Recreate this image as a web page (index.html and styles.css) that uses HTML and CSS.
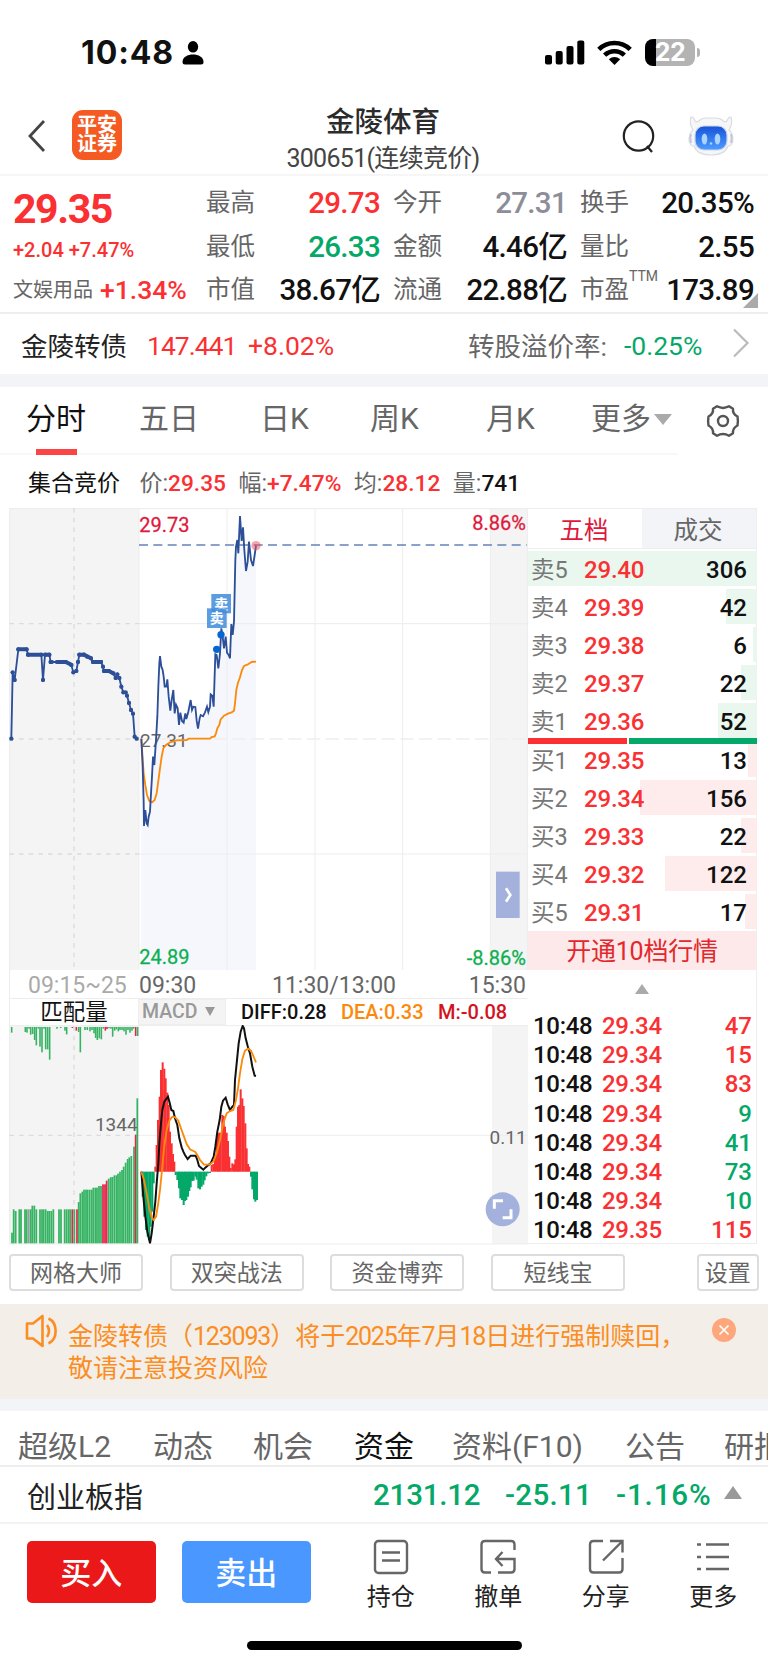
FILE: index.html
```html
<!DOCTYPE html>
<html lang="zh-CN">
<head>
  <meta charset="UTF-8">
  <meta name="viewport" content="width=device-width, initial-scale=1.0">
  <title>金陵体育 300651</title>
  <link rel="stylesheet" href="styles.css">
</head>
<body>
  <div class="status-bar">
    <span class="clock">10:48</span>
    <svg class="person" width="22" height="24" viewBox="0 0 22 24"><ellipse cx="11" cy="5.8" rx="5.2" ry="5.8"/><path d="M0.5 21C0.5 16 5.5 13.4 11 13.4S21.500 16 21.500 21Q21.500 23.500 19 23.500H3Q0.500 23.500 0.500 21Z"/></svg>
    <svg class="signal" width="40" height="25" viewBox="0 0 40 25"><rect x="0" y="15" width="7" height="9.500" rx="2"/><rect x="10.700" y="11" width="7" height="13.500" rx="2"/><rect x="21.500" y="6" width="7" height="18.500" rx="2"/><rect x="32.300" y="0.500" width="7" height="24" rx="2"/></svg>
    <svg class="wifi" width="35" height="26" viewBox="0 0 35 26" fill="none" stroke="#000" stroke-width="4.600"><path d="M1.800 9.300C10.500 0.800 24.500 0.800 33.200 9.300"/><path d="M7.600 15.200C13.200 9.900 21.800 9.900 27.400 15.200"/><path d="M17.500 25L11.800 19.300Q17.500 14.600 23.200 19.300Z" fill="#000" stroke="none"/></svg>
    <div class="battery"><span>22</span></div>
    <i class="battery-tip"></i>
  </div>

  <header class="header">
    <svg class="back" width="20" height="34" viewBox="0 0 20 34"><path d="M17 2L3 17L17 32"/></svg>
    <div class="logo">平安<br>证券</div>
    <div class="title">
      <h1>金陵体育</h1>
      <p>300651(连续竞价)</p>
    </div>
    <svg class="search" width="34" height="36" viewBox="0 0 34 36"><circle cx="16.500" cy="17" r="14.700"/><path d="M25 27L30 33"/></svg>
    <svg class="robot" width="46" height="40" viewBox="0 0 46 40">
      <defs><linearGradient id="face" x1="0" y1="0" x2="0" y2="1"><stop offset="0" stop-color="#1652d8"/><stop offset="1" stop-color="#4f9cff"/></linearGradient></defs>
      <path d="M3 1Q6 1 7 5Q9 7 12 4Q14 2 18 2H28Q32 2 34 4Q37 7 39 5Q40 1 43 1Q45 8 41 14Q45 17 45 25Q44 30 40 30Q37 39 23 39T6 30Q2 30 1 25Q1 17 5 14Q1 8 3 1Z" fill="#f5f6f8" stroke="#d9dce1" stroke-width="1.200"/>
      <path d="M3 18Q1.500 22 3 27M43 18Q44.500 22 43 27" fill="none" stroke="#c3c9d2" stroke-width="2"/>
      <rect x="7" y="10" width="32" height="24" rx="9" fill="url(#face)" stroke="#c9d6ea" stroke-width="1.200"/>
      <ellipse cx="16.500" cy="23" rx="2.800" ry="5.500" fill="#a9d4ff"/><ellipse cx="29.500" cy="23" rx="2.800" ry="5.500" fill="#a9d4ff"/><circle cx="23" cy="27.500" r="1.200" fill="#a9d4ff"/>
    </svg>
  </header>

  <section class="quote">
    <div class="price-box">
      <div class="price">29.35</div>
      <div class="change">+2.04 +7.47%</div>
      <div class="sector">文娱用品 <b>+1.34%</b></div>
    </div>
    <dl class="stats">
      <dt>最高</dt><dd class="up">29.73</dd>
      <dt>今开</dt><dd class="flat">27.31</dd>
      <dt>换手</dt><dd>20.35%</dd>
      <dt>最低</dt><dd class="down">26.33</dd>
      <dt>金额</dt><dd>4.46亿</dd>
      <dt>量比</dt><dd>2.55</dd>
      <dt>市值</dt><dd>38.67亿</dd>
      <dt>流通</dt><dd>22.88亿</dd>
      <dt>市盈<sup>TTM</sup></dt><dd>173.89</dd>
    </dl>
    <i class="corner"></i>
  </section>

  <section class="bond">
    <span class="bond-name">金陵转债</span>
    <span class="bond-price">147.441</span>
    <span class="bond-change">+8.02%</span>
    <span class="premium">转股溢价率:</span>
    <span class="premium-value">-0.25%</span>
    <svg width="18" height="30" viewBox="0 0 18 30"><path d="M2 1.500L15.500 15L2 28.500"/></svg>
  </section>

  <nav class="period">
    <a class="active">分时</a><a>五日</a><a>日K</a><a>周K</a><a>月K</a><a class="more">更多</a>
    <svg class="gear" width="34" height="34" viewBox="0 0 34 34"><path d="M11 2.300Q17 5.600 23 2.300L27 4.800Q26.500 10 31.500 12.500Q32.300 17 31.500 21.500Q26.500 24 27 29.200L23 31.700Q17 28.400 11 31.700L7 29.200Q7.500 24 2.500 21.500Q1.700 17 2.500 12.500Q7.500 10 7 4.800Z"/><circle cx="17" cy="17" r="5"/></svg>
  </nav>

  <div class="summary">
    <span class="phase">集合竞价</span>
    <span>价:<b>29.35</b></span>
    <span>幅:<b>+7.47%</b></span>
    <span>均:<b>28.12</b></span>
    <span>量:<b class="black">741</b></span>
  </div>

  <main class="board">
    <div class="charts">
      <!-- 分时图, 1px = 3 units -->
      <svg class="trend" width="528" height="462" viewBox="0 24 1584 1386">
        <defs><marker id="dot" markerUnits="userSpaceOnUse" markerWidth="14" markerHeight="14" refX="7" refY="7"><circle cx="7" cy="7" r="6.500" fill="#2c4f98"/></marker></defs>
        <rect x="28" y="24" width="389" height="1386" class="shade"/>
        <rect x="1471" y="24" width="113" height="1386" class="shade"/>
        <polygon class="area" points="424,716 432,978 443,975 450,935 459,770 468,720 480,468 491,530 511,632 520,570 537,675 556,640 572,600 594,686 615,637 637,587 641,620 646,463 655,505 664,385 672,445 690,475 702,365 708,140 720,48 738,213 747,125 759,198 768,137 768,1410 424,1410"/>
        <path class="grid" d="M28 26H1584M29 24V1410M417 24V1410M681 24V1410M945 24V1410M1208 24V1410M1471 24V1410M1582 24V1410M417 371H1584M417 1062H1584"/>
        <path class="dash" d="M222 24V1410M28 371H417M28 717H417M28 1062H417"/>
        <path class="dash light" d="M417 717H1584"/>
        <text x="420" y="742" class="mid">27.31</text>
        <polyline class="auction" points="34,716 38,517 44,540 55,448 80,448 84,464 124,464 129,540 135,464 148,464 152,486 197,486 214,495 220,517 229,513 234,486 238,464 252,464 262,470 273,475 279,486 303,486 309,500 312,513 326,513 340,520 347,534 352,523 358,534 364,560 370,577 377,577 381,587 387,609 393,630 399,641 404,710 410,716"/>
        <path class="auction-flat" d="M55 448H79M84 464H122M137 464H148M152 486H156M170 486H197L212 493M238 464H252L273 475M279 486H303M312 513H326L340 520"/>
        <polyline class="average" points="424,716 427,760 431,820 436,855 441,885 448,903 456,907 464,900 470,880 474,850 480,805 485,770 490,745 498,735 510,727 530,721 560,720 566,716 630,716 635,711 644,709 648,700 652,685 658,675 662,658 672,647 684,641 695,637 702,632 705,610 709,570 714,548 720,532 726,510 732,498 742,494 755,486 768,485"/>
        <path class="last" d="M417 135H1580"/>
        <polyline class="line" points="424,716 428,800 431,905 432,978 436,930 440,970 443,975 446,950 450,935 453,880 456,830 459,770 463,795 468,720 472,650 475,560 478,490 480,468 484,500 488,510 491,530 494,560 499,560 502,538 506,590 511,632 515,600 520,570 524,640 528,614 533,625 537,675 541,638 546,663 551,668 556,640 559,657 565,635 568,620 572,600 576,630 580,620 586,621 590,662 594,686 599,655 602,645 609,649 615,637 621,620 625,636 630,620 632,583 637,587 641,620 646,463 650,465 655,505 660,460 664,385 668,410 672,445 677,410 681,458 686,465 690,475 694,372 698,405 702,365 706,180 708,140 712,120 715,160 720,48 725,123 729,82 733,150 738,213 743,185 747,125 753,180 759,198 764,165 768,137"/>
        <circle cx="768" cy="137" r="14" fill="#ee4a5c" opacity="0.5"/>
        <circle cx="650" cy="448" r="11" fill="#0566d2"/><circle cx="663" cy="404" r="11" fill="#0566d2"/>
        <rect class="tag" x="634" y="282" width="59" height="58"/><text class="tag-text" x="643" y="326">卖</text>
        <rect class="tag" x="621" y="325" width="59" height="59"/><text class="tag-text" x="629" y="370">卖</text>
        <text x="418" y="95" class="high">29.73</text>
        <text x="1578" y="91" class="high" text-anchor="end">8.86%</text>
        <text x="418" y="1391" class="low">24.89</text>
        <text x="1578" y="1395" class="low" text-anchor="end">-8.86%</text>
        <rect x="1488" y="1115" width="71" height="139" fill="#a3b1dc"/>
        <path d="M1518 1165L1531 1185L1518 1205" fill="none" stroke="#fff" stroke-width="8"/>
      </svg>
      <div class="axis"><span class="pre">09:15~25</span><span class="t1">09:30</span><span class="t2">11:30/13:00</span><span class="t3">15:30</span></div>
      <div class="indicator"><span class="match">匹配量</span><span class="macd">MACD<i></i></span><span class="diff">DIFF:0.28</span><span class="dea">DEA:0.33</span><span class="m">M:-0.08</span></div>
      <svg class="sub" width="528" height="220" viewBox="0 45 1584 660">
        <rect x="28" y="48" width="389" height="654" class="shade"/>
        <rect x="1476" y="48" width="108" height="654" class="shade"/>
        <path class="grid" d="M28 47H1584M29 45V702M28 702H1584M417 376H1584"/>
        <path class="dash" d="M222 48V702M28 376H417"/>
        <g id="bars"></g>
        <polyline class="k-line" points="424,485 430,560 436,620 442,665 450,700 455,670 461,620 466,575 470,520 475,460 478,400 483,340 487,300 493,275 498,268 504,260 509,278 514,300 520,303 525,325 532,345 538,385 545,412 550,425 555,435 563,447 572,437 587,437 592,450 597,468 603,473 610,479 616,473 624,466 632,460 641,440 646,410 652,365 659,330 664,290 669,272 677,263 683,283 690,300 697,290 702,285 705,210 710,160 716,100 722,65 728,48 732,55 737,85 743,108 750,130 757,170 764,197 768,198"/>
        <polyline class="average" points="424,485 432,510 440,550 448,595 455,622 461,630 468,620 474,585 480,540 486,480 492,415 500,360 508,332 517,320 526,322 535,332 543,355 552,380 560,402 570,418 586,426 592,435 600,450 612,464 628,464 640,455 650,430 660,390 670,340 680,310 690,303 700,300 708,270 714,235 720,190 727,148 735,122 745,116 753,122 760,138 768,157"/>
        <text x="413" y="362" class="mid" text-anchor="end">1344</text>
        <text x="1580" y="401" class="mid" text-anchor="end">0.11</text>
        <circle cx="1508" cy="598" r="51" fill="#a3b1dc"/>
        <path d="M1483 596V572H1509M1533 598V623H1508" fill="none" stroke="#fff" stroke-width="9"/>
      </svg>
    </div>

    <aside class="book">
      <div class="book-tabs"><span class="on">五档</span><span>成交</span></div>
      <div id="asks"></div>
      <div class="ratio"><i></i><b></b></div>
      <div id="bids"></div>
      <div class="unlock">开通10档行情</div>
      <div class="fold"><i></i></div>
      <div id="ticks"></div>
    </aside>
  </main>

  <div class="tools">
    <button>网格大师</button><button>双突战法</button><button>资金博弈</button><button>短线宝</button><button class="setting">设置</button>
  </div>

  <div class="notice">
    <svg class="horn" width="33" height="34" viewBox="0 0 33 34"><path d="M2 9.500H8L17.500 2V32L8 24.500H2Z"/><path d="M22 11Q26 17 22 23M23.500 4.500C33 9 33 25 23.500 29.500"/></svg>
    <p>金陵转债（<span>123093</span>）将于<span>2025</span>年<span>7</span>月<span>18</span>日进行强制赎回，<br>敬请注意投资风险</p>
    <svg class="close" width="24" height="24" viewBox="0 0 24 24"><circle cx="12" cy="12" r="12"/><path d="M7.500 7.500L16.500 16.500M16.500 7.500L7.500 16.500"/></svg>
  </div>

  <nav class="info-tabs">
    <a>超级L2</a><a>动态</a><a>机会</a><a class="active">资金</a><a>资料(F10)</a><a>公告</a><a>研报</a>
  </nav>

  <div class="index-row">
    <span class="index-name">创业板指</span><span class="i1">2131.12</span><span class="i2">-25.11</span><span class="i3">-1.16%</span><i></i>
  </div>

  <footer class="actions">
    <button class="buy">买入</button>
    <button class="sell">卖出</button>
    <div class="action"><svg width="36" height="36" viewBox="0 0 36 36"><rect x="2" y="2" width="32" height="32" rx="3.500"/><path d="M9 13.500H27M9 21.500H27"/></svg>持仓</div>
    <div class="action"><svg width="36" height="36" viewBox="0 0 36 36"><path d="M11 33.500H5Q1.500 33.500 1.500 30V5.500Q1.500 2 5 2H31Q34.500 2 34.500 5.500V11M18 33.500H31Q34.500 33.500 34.500 30V20H16M22.500 13L16 20L22.500 27"/></svg>撤单</div>
    <div class="action"><svg width="36" height="36" viewBox="0 0 36 36"><path d="M15 2H5.500Q2 2 2 5.500V30Q2 33.500 5.500 33.500H31Q34.500 33.500 34.500 30V19M22 2H34.500V13.500M34.500 2L15 21.500"/></svg>分享</div>
    <div class="action"><svg width="36" height="36" viewBox="0 0 36 36"><path d="M11 5.500H34M11 18H34M11 30H34M2 5.500H6M2 18H6M2 30H6"/></svg>更多</div>
  </footer>
  <div class="home"></div>

  <script>
    const RED = '#fa3032', GREEN = '#04a868';
    const bars = document.getElementById('bars');

    function bar(x, from, to, color, width) {
      const r = document.createElementNS('http://www.w3.org/2000/svg', 'rect');
      r.setAttribute('x', x - width / 2);
      r.setAttribute('y', Math.min(from, to));
      r.setAttribute('width', width);
      r.setAttribute('height', Math.abs(to - from));
      r.setAttribute('fill', color);
      bars.appendChild(r);
    }

    // 未匹配量
    const unmatched = [[35,68],[76,66],[81,68],[87,56],[92,74],[98,72],[104,90],[109,106],[115,56],[120,110],[126,127],[132,56],[137,118],[143,118],[149,149],[171,56],[182,54],[195,62],[200,73],[217,54,1],[229,62,1],[236,66],[241,127],[255,60],[262,60],[270,64],[276,60],[282,70],[287,84],[292,90],[298,85],[304,88],[310,56],[316,62,1],[321,57,1],[327,55],[333,56],[338,80],[344,62],[349,58],[355,64],[360,60],[366,60],[372,64],[378,74],[384,60],[390,68],[396,62],[401,56],[407,78,1],[413,78]];
    unmatched.forEach(([x, y, red]) => bar(x, 51, y, red ? '#e5254a' : '#36b463', 4.8));

    // 匹配量
    const matched = [[36,668],[41,598],[47,603],[58,598],[63,598],[75,598],[80,598],[86,598,2],[92,598],[97,587],[103,587],[109,598],[120,598],[126,598],[131,598],[137,598],[143,603],[148,603],[154,603],[160,598],[177,598],[183,598],[194,598],[200,598],[206,598],[211,598],[217,598,1],[223,598],[231,598,1],[236,576],[241,550],[247,545],[252,539],[258,539],[263,539],[269,539],[275,539],[280,533],[286,533],[291,533],[297,528],[303,528],[309,523,1],[315,523,1],[320,512,1],[326,506],[332,502],[337,501],[343,496],[349,496],[354,491],[360,485],[366,480],[371,470],[377,458],[383,447],[388,442],[394,438],[402,410],[407,374,1],[412,265]];
    matched.forEach(([x, y, c]) => bar(x, 700, y, ['#36b463', '#e5254a', '#999'][c || 0], 5.3));

    // MACD
    const macd = [428,560,433,620,438,660,443,680,448,690,452,650,457,605,461,520,466,470,470,405,474,330,479,260,483,180,488,157,493,176,497,205,502,248,506,285,510,365,515,400,519,432,523,455,527,495,532,510,537,535,541,565,546,570,551,585,555,573,559,570,564,560,568,543,572,532,576,513,581,512,586,500,590,509,595,535,600,538,605,530,610,524,614,511,619,499,624,490,630,489,635,465,640,462,645,440,650,390,654,370,658,368,662,368,667,315,671,318,675,350,680,368,684,393,688,440,692,474,697,460,702,463,706,448,710,350,714,290,718,285,722,238,727,265,731,288,736,340,740,415,744,462,748,470,753,500,757,538,762,568,766,575,771,570];
    for (let i = 0; i < macd.length; i += 2) {
      bar(macd[i], 485, macd[i + 1], macd[i + 1] < 485 ? RED : GREEN, 6);
    }

    // 五档: 名称, 价格, 数量, 底色宽度
    const asks = [['卖5','29.40',306,229],['卖4','29.39',42,31],['卖3','29.38',6,4],['卖2','29.37',22,16],['卖1','29.36',52,39]];
    const bids = [['买1','29.35',13,9],['买2','29.34',156,117],['买3','29.33',22,16],['买4','29.32',122,92],['买5','29.31',17,12]];
    const level = (cls) => ([name, price, vol, w]) =>
      `<div class="level ${cls}"><i style="width:${w}px"></i><span>${name}</span><em>${price}</em><b>${vol}</b></div>`;
    document.getElementById('asks').innerHTML = asks.map(level('ask')).join('');
    document.getElementById('bids').innerHTML = bids.map(level('bid')).join('');

    const ticks = [['29.34',47,'up'],['29.34',15,'up'],['29.34',83,'up'],['29.34',9,'down'],['29.34',41,'down'],['29.34',73,'down'],['29.34',10,'down'],['29.35',115,'up']];
    document.getElementById('ticks').innerHTML = ticks.map(([p, v, c]) =>
      `<div class="tick"><span>10:48</span><em>${p}</em><b class="${c}">${v}</b></div>`).join('');
  </script>
</body>
</html>
```
FILE: styles.css
```css
* {
  box-sizing: border-box;
}

body {
  margin: 0;
  width: 768px;
  height: 1665px;
  overflow: hidden;
  background: #fff;
  color: #111;
  font-family: Roboto, "Noto Sans CJK SC", sans-serif;
  white-space: nowrap;
}

i, em {
  font-style: normal;
}

button {
  font-family: inherit;
  padding: 0;
}

.up { color: #fa3032; }
.down { color: #04a868; }

/* status bar */
.status-bar {
  display: flex;
  align-items: center;
  height: 105px;
  padding-left: 81px;
}

.clock {
  width: 101px;
  font: 700 32px/32px Inter, sans-serif;
  letter-spacing: 0.9px;
}

.signal { margin-left: 341px; }
.wifi { margin-left: 12px; }

.battery {
  width: 50px;
  height: 27px;
  margin-left: 13px;
  border-radius: 8px;
  background: linear-gradient(90deg, #000 11px, #b3b3b3 11px);
  color: #fff;
  font: 700 25px/27px Inter, sans-serif;
  text-align: center;
  letter-spacing: -0.5px;
}

.battery-tip {
  width: 3px;
  height: 9px;
  margin-left: 2px;
  border-radius: 0 3px 3px 0;
  background: #b3b3b3;
}

/* header */
.header {
  display: flex;
  height: 71px;
  border-bottom: 2px solid #f6f6f6;
}

.back {
  margin: 14px 0 0 27px;
  fill: none;
  stroke: #444;
  stroke-width: 2.8;
}

.logo {
  width: 50px;
  height: 50px;
  margin: 5px 0 0 25px;
  padding-top: 6px;
  border-radius: 11px;
  background: #f45a22;
  color: #fff;
  font-size: 20px;
  font-weight: 700;
  line-height: 18.5px;
  text-align: center;
}

.title {
  width: 240px;
  margin-left: 141px;
  text-align: center;
}

.title h1 {
  margin: 0;
  font-size: 28.500px;
  font-weight: 500;
  line-height: 35px;
  color: #2b2b2b;
}

.title p {
  margin: 1px 0 0;
  font-size: 25px;
  line-height: 36px;
  color: #444;
  letter-spacing: -0.7px;
}

.search {
  margin: 14px 0 0 119px;
  fill: none;
  stroke: #222;
  stroke-width: 2.2;
}

.robot {
  margin: 11px 0 0 32px;
}

/* quote */
.quote {
  position: relative;
  display: flex;
  height: 138px;
  padding-left: 13px;
  border-bottom: 2px solid #eee;
}

.price-box {
  width: 193px;
  color: #fa3032;
}

.price {
  height: 55px;
  padding-top: 9px;
  font-size: 41px;
  font-weight: 700;
  line-height: 48px;
  letter-spacing: -1.4px;
}

.change {
  margin-top: 7px;
  font-size: 20px;
  font-weight: 500;
  line-height: 24px;
}

.sector {
  display: flex;
  gap: 7px;
  align-items: center;
  margin-top: 11px;
  font-size: 20px;
  line-height: 34px;
  color: #666;
}

.sector b {
  color: #fa3032;
  font-size: 26.500px;
  font-weight: 500;
}

.stats {
  display: grid;
  grid-template-columns: 58px 116px 71px 116px 71px 116px;
  grid-template-rows: 44px 43px 42px;
  margin: 4px 0 0;
  line-height: 46px;
}

.stats dt {
  font-size: 24.500px;
  color: #666;
}

.stats dt:nth-of-type(3n+2),
.stats dt:nth-of-type(3n) {
  padding-left: 13px;
}

.stats dd {
  margin: 0;
  font-size: 29.500px;
  font-weight: 500;
  text-align: right;
  letter-spacing: -0.7px;
}

.stats .up { color: #fa3032; }
.stats .down { color: #04a868; }
.stats .flat { color: #8d8d99; }

.stats sup {
  display: inline-block;
  width: 0;
  font-size: 14px;
  line-height: 1;
  vertical-align: 17px;
}

.corner {
  position: absolute;
  right: 10px;
  bottom: 4px;
  border-left: 15px solid transparent;
  border-bottom: 15px solid #aaa;
}

.bond {
  display: flex;
  align-items: center;
  height: 73px;
  padding: 0 0 0 21px;
  border-bottom: 13px solid #f2f4f8;
  font-size: 26.500px;
}

.bond-name { width: 126px; color: #222; }

.bond-price,
.bond-change,
.premium-value {
  padding-top: 3px;
  font-size: 26.500px;
  color: #fa3032;
}

.bond-price { width: 101px; letter-spacing: -1px; }
.bond-change { width: 220px; }
.premium { width: 156px; color: #666; }
.premium-value { width: 108px; color: #04a868; }

.bond svg {
  margin-top: -3px;
  fill: none;
  stroke: #bbb;
  stroke-width: 2.2;
}

/* periods */
.period {
  display: grid;
  grid-template-columns: 113px 121px 110px 116px 105px 116px 40px;
  height: 68px;
  padding-left: 26px;
  font-size: 30px;
  line-height: 64px;
  color: #666;
  background: linear-gradient(#f8f8f8, #f8f8f8) 0 66px / 678px 2px no-repeat;
}

.period .active {
  color: #111;
  background: linear-gradient(#fa4446, #fa4446) 10px 62px / 41px 6px no-repeat;
}

.more::after {
  content: "";
  display: inline-block;
  margin-left: 3px;
  vertical-align: 4px;
  border: 9px solid transparent;
  border-top: 11px solid #aaa;
  border-bottom: 0;
}

.gear {
  margin: 17px 0 0 -1px;
  fill: none;
  stroke: #555;
  stroke-width: 2.4;
  stroke-linejoin: round;
}

.summary {
  display: flex;
  gap: 12.500px;
  align-items: center;
  height: 53px;
  padding: 0 0 2px 28px;
  font-size: 23px;
  color: #666;
}

.summary .phase {
  width: 99px;
  color: #111;
}

.summary b {
  color: #fa3032;
  font-size: 22.700px;
  font-weight: 500;
}

.summary .black { color: #111; }

/* charts */
.board {
  display: flex;
  height: 737px;
}

.charts { width: 528px; }
.charts svg { display: block; }

.shade { fill: #f4f4f4; }

.grid {
  fill: none;
  stroke: #ededed;
  stroke-width: 3;
}

.dash {
  fill: none;
  stroke: #dcdcdc;
  stroke-width: 4;
  stroke-dasharray: 14 15;
}

.light {
  stroke: #eee;
  stroke-dasharray: 40 16;
}

.area { fill: #f5f7fc; }
.line, .auction { fill: none; stroke: #2c4f98; stroke-width: 5.500; }
.auction { marker: url(#dot); }
.auction-flat { fill: none; stroke: #2c4f98; stroke-width: 12; stroke-linecap: round; }
.average { fill: none; stroke: #fb8a0c; stroke-width: 5.500; }
.k-line { fill: none; stroke: #111; stroke-width: 6; }
.last { stroke: #6681ba; stroke-width: 4; stroke-dasharray: 27 16; }

.trend text, .sub text {
  font-size: 60px;
  font-weight: 500;
}

.trend .high { fill: #e0183c; font-weight: 400; stroke: #e0183c; stroke-width: 0.8; }
.trend .low { fill: #0cb050; font-weight: 400; stroke: #0cb050; stroke-width: 0.8; }

.trend .mid, .sub .mid {
  fill: #666;
  font-size: 57px;
  font-weight: 400;
}

.tag { fill: #3f8cdc; fill-opacity: 0.85; }

.trend .tag-text {
  fill: #fff;
  font-size: 42px;
  font-weight: 700;
}

.axis, .indicator {
  display: flex;
  align-items: center;
  height: 28px;
  margin-left: 9px;
  border-left: 1px solid #ededed;
}

.axis {
  padding-top: 3px;
  font-size: 23px;
  line-height: 25px;
  color: #666;
}

.axis .pre {
  width: 129px;
  padding-left: 18px;
  color: #aaa;
}

.axis .t1 { width: 133px; }
.axis .t2 { width: 189px; }
.axis .t3 { width: 65px; text-align: right; }

.indicator {
  height: 27px;
  border-top: 1px solid #ededed;
  font-size: 20px;
  font-weight: 500;
  line-height: 24px;
}

.match {
  width: 128px;
  font-size: 22.500px;
  font-weight: 400;
  text-align: center;
}

.macd {
  width: 88px;
  height: 26px;
  padding-left: 3px;
  background: #f4f4f4;
  color: #999;
  border: 1px solid #eee;
  font-size: 19.500px;
}

.macd i {
  display: inline-block;
  margin-left: 8px;
  vertical-align: 2px;
  border: 5px solid transparent;
  border-top: 9px solid #999;
  border-bottom: 0;
}

.diff { margin-left: 15px; width: 100px; }
.dea { width: 97px; color: #fb8a0c; }
.m { color: #d21420; }

/* order book */
.book {
  width: 229px;
  height: 736px;
  border: 1px solid #eee;
  border-left: 0;
}

.book-tabs {
  display: flex;
  height: 40px;
  border-bottom: 1px solid #eee;
  font-size: 24.500px;
  line-height: 43px;
  text-align: center;
}

.book-tabs span {
  width: 115px;
  padding-right: 2px;
  color: #666;
  background: #f2f4f8;
}

.book-tabs .on {
  background: #fff;
  color: #e0183c;
}

#asks { padding-top: 2px; height: 192px; }
#bids { height: 189px; margin-top: -2px; }

.level {
  display: grid;
  grid-template-columns: 53px 80px 83px;
  align-items: start;
  width: 229px;
  height: 34.500px;
  margin-bottom: 3.600px;
  padding-left: 3px;
  line-height: 38px;
}

.level i {
  grid-area: 1 / 1 / 2 / 4;
  justify-self: end;
  height: 34.500px;
  margin-right: -10px;
  background: #e9f7ee;
}

.bid i { background: #feeced; }

.level span { grid-area: 1 / 1; color: #777; font-size: 23.500px; }
.level em { grid-area: 1 / 2; color: #fa3032; font-weight: 500; font-size: 24px; letter-spacing: -0.2px; }
.level b { grid-area: 1 / 3; font-weight: 500; text-align: right; font-size: 24px; }

.ratio {
  position: relative;
  display: flex;
  gap: 2px;
  width: 229px;
  height: 6px;
  margin-top: -3px;
}

.ratio i { width: 99px; background: #fa3032; }
.ratio b { flex: 1; background: #04a868; }

.unlock {
  position: relative;
  height: 39px;
  background: #fde8ea;
  color: #e2282c;
  font-size: 25px;
  line-height: 41px;
  text-align: center;
  letter-spacing: -0.2px;
}

.fold {
  display: flex;
  justify-content: center;
  height: 42px;
  padding: 14px 0 0;
}

.fold i {
  height: 0;
  margin-right: 1px;
  border: 7px solid transparent;
  border-bottom: 10px solid #aaa;
  border-top: 0;
}

.tick {
  display: flex;
  height: 29.200px;
  padding: 0 4px 0 5px;
  font-size: 24px;
  line-height: 29px;
}

.tick span { width: 69px; font-weight: 500; letter-spacing: -0.3px; }
.tick em { width: 70px; color: #fa3032; font-weight: 500; letter-spacing: -0.3px; }
.tick b { flex: 1; font-weight: 500; text-align: right; }

/* tools */
.tools {
  display: flex;
  gap: 26.700px;
  height: 59px;
  padding: 9px 0 0 9px;
}

.tools button {
  width: 134px;
  height: 37px;
  padding-top: 3px;
  border: 2px solid #ddd;
  border-radius: 4px;
  background: #fff;
  color: #666;
  font-size: 23px;
  line-height: 30px;
}

.tools .setting { width: 62px; margin-left: 45px; }

.notice {
  display: flex;
  height: 107px;
  border-bottom: 12px solid #f2f4f8;
  background: #f3eee8;
  color: #fb8d22;
}

.horn {
  margin: 10px 0 0 25px;
  fill: none;
  stroke: #fb8d22;
  stroke-width: 2.6;
  stroke-linejoin: round;
}

.notice p {
  width: 643px;
  margin: 17px 0 0 10px;
  font-size: 25px;
  line-height: 32px;
}

.notice p span { letter-spacing: -1.2px; }

.close { margin-top: 14px; margin-left: 1px; }
.close circle { fill: #ffa77c; }
.close path { stroke: #fff; stroke-width: 1.6; }

.info-tabs {
  display: grid;
  grid-template-columns: 135px 100px 101px 98px 173px 99px 62px;
  height: 56px;
  padding-left: 18px;
  overflow: hidden;
  border-bottom: 2px solid #eee;
  color: #666;
  font-size: 30px;
  line-height: 72px;
}

.info-tabs .active { color: #111; }

.index-row {
  display: flex;
  align-items: center;
  height: 57px;
  padding: 1px 0 0 27px;
  border-bottom: 2px solid #f3f3f3;
  color: #04a868;
  font-size: 29.500px;
  font-weight: 500;
}

.index-name { width: 346px; color: #222; font-size: 29px; font-weight: 400; }
.i1 { width: 132px; letter-spacing: -0.200px; }
.i2 { width: 111px; letter-spacing: 0.3px; }
.i3 { width: 108px; letter-spacing: 0.900px; }

.index-row i {
  margin-top: -5px;
  border: 9px solid transparent;
  border-bottom: 13px solid #999;
  border-top: 0;
}

/* actions */
.actions {
  display: flex;
  height: 117px;
  padding: 17px 0 0 27px;
}

.actions button {
  width: 128.500px;
  height: 62px;
  padding-top: 4px;
  margin-right: 26.500px;
  border: 0;
  border-radius: 5px;
  color: #fff;
  font-size: 31px;
  font-weight: 500;
  line-height: 58px;
}

.buy { background: #ea1818; }
.sell { background: #4a98ff; }

.action {
  display: flex;
  flex-direction: column;
  align-items: center;
  width: 107.500px;
  margin-top: -2px;
  font-size: 24px;
  line-height: 44px;
  color: #222;
}

.action svg {
  flex-shrink: 0;
  fill: none;
  stroke: #666;
  stroke-width: 2.4;
}

.home {
  width: 275px;
  height: 9px;
  margin: 0 auto;
  border-radius: 5px;
  background: #000;
}
```
